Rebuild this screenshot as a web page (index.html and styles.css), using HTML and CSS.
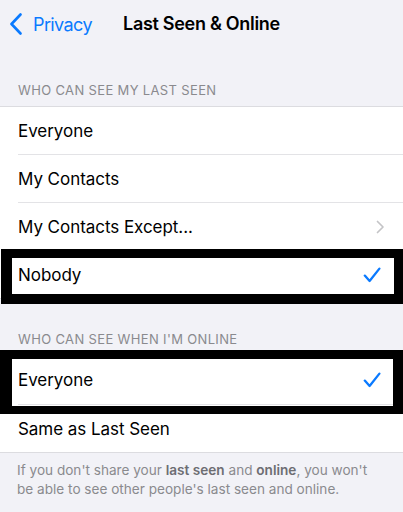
FILE: index.html
```html
<!DOCTYPE html>
<html>
<head>
<meta charset="utf-8">
<link rel="stylesheet" href="styles.css">
</head>
<body>
<div class="nav">
  <div class="back">
    <svg class="back-icon" width="14" height="22" viewBox="0 0 14 22"><path d="M11.5 1.5 L2.5 11 L11.5 20.5" fill="none" stroke="#0a7aff" stroke-width="2.6" stroke-linecap="round" stroke-linejoin="round"/></svg>
    <span class="back-label">Privacy</span>
  </div>
  <div class="title">Last Seen &amp; Online</div>
</div>

<div class="section-header first">WHO CAN SEE MY LAST SEEN</div>
<div class="group">
  <div class="row"><span class="label">Everyone</span></div>
  <div class="row"><span class="label">My Contacts</span></div>
  <div class="row"><span class="label">My Contacts Except...</span>
    <svg class="chev" width="9" height="14" viewBox="0 0 9 14"><path d="M1.5 1.5 L7 7 L1.5 12.5" fill="none" stroke="#c4c4c7" stroke-width="1.7" stroke-linecap="round" stroke-linejoin="round"/></svg>
  </div>
  <div class="row marked mark-a"><span class="label">Nobody</span>
    <svg class="check" width="18" height="16" viewBox="0 0 18 16"><path d="M1.8 8.6 L6.6 14 L16.4 1.6" fill="none" stroke="#0a7aff" stroke-width="2.3" stroke-linecap="round" stroke-linejoin="round"/></svg>
  </div>
</div>

<div class="section-header second">WHO CAN SEE WHEN I'M ONLINE</div>
<div class="group">
  <div class="row tall marked mark-b"><span class="label">Everyone</span>
    <svg class="check" width="18" height="16" viewBox="0 0 18 16"><path d="M1.8 8.6 L6.6 14 L16.4 1.6" fill="none" stroke="#0a7aff" stroke-width="2.3" stroke-linecap="round" stroke-linejoin="round"/></svg>
  </div>
  <div class="row"><span class="label">Same as Last Seen</span></div>
</div>
<div class="footer">If you don't share your <b>last seen</b> and <b>online</b>, you won't be able to see other people's last seen and online.</div>
</body>
</html>
```
FILE: styles.css
```css
html, body {
  margin: 0;
  padding: 0;
  background: #f2f2f7;
  font-family: Inter, "Liberation Sans", sans-serif;
  color: #000;
}
body {
  width: 403px;
  height: 512px;
  overflow: hidden;
}
.nav {
  position: relative;
  height: 46px;
  display: flex;
  align-items: center;
  justify-content: center;
}
.back {
  position: absolute;
  left: 9px;
  top: 13px;
  display: flex;
  align-items: center;
  gap: 10px;
  color: #0a7aff;
}
.back-label {
  font-size: 18px;
  letter-spacing: -0.6px;
}
.title {
  font-size: 18px;
  font-weight: 600;
  letter-spacing: -0.3px;
}
.section-header {
  font-size: 13px;
  line-height: 16px;
  color: #8a8a8e;
  padding: 0 18px 8px;
  letter-spacing: 0.35px;
}
.section-header.first { padding-top: 36px; }
.section-header.second { padding-top: 32px; }
.group {
  background: #fff;
  border-top: 1px solid #dcdce0;
  border-bottom: 1px solid #dcdce0;
}
.row {
  position: relative;
  height: 47px;
  margin-left: 18px;
  padding-right: 22px;
  display: flex;
  align-items: center;
  justify-content: space-between;
  border-bottom: 1px solid #e3e3e6;
}
.row:last-child { border-bottom: none; }
.row.tall { height: 48px; }
.label {
  font-size: 17px;
  letter-spacing: -0.05px;
}
.chev { margin-right: -4px; }
.marked::after {
  content: "";
  position: absolute;
  border-style: solid;
  border-color: #000;
  pointer-events: none;
}
.mark-a::after {
  top: -2px;
  bottom: -6px;
  left: -17px;
  right: 0;
  border-width: 9px 9px 10px 11px;
}
.mark-b::after {
  top: -6px;
  bottom: -10px;
  left: -18px;
  right: 0;
  border-width: 9px 10px 8px 12px;
}
.footer {
  padding: 8px 28px 0 17px;
  font-size: 13.6px;
  line-height: 19px;
  color: #8a8a8e;
}
.footer b {
  font-weight: 600;
  color: #6d6d72;
}
```
